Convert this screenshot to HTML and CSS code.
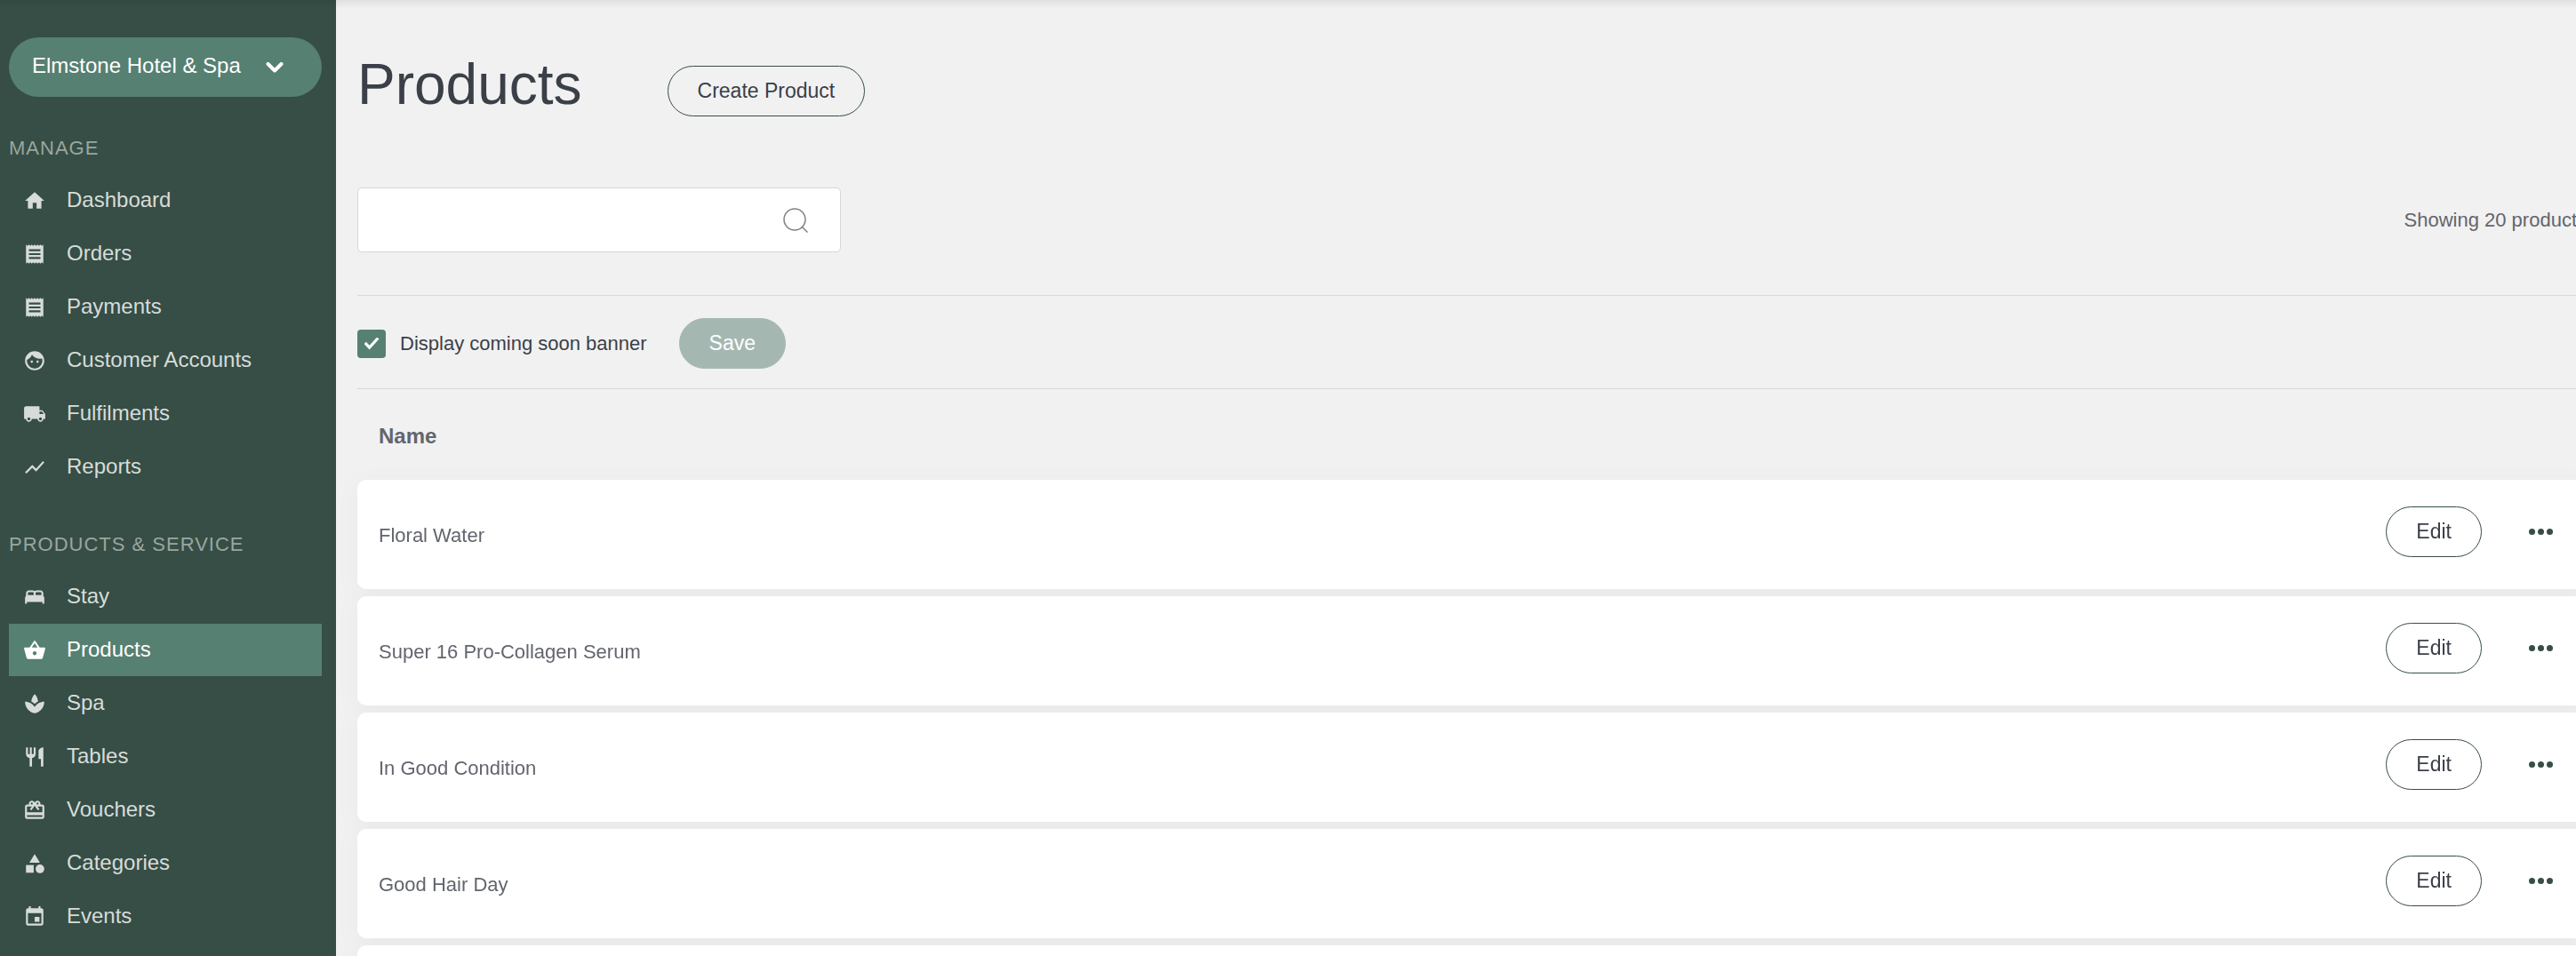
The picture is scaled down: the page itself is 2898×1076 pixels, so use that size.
FILE: index.html
```html
<!DOCTYPE html>
<html lang="en">
<head>
<meta charset="utf-8">
<title>Products</title>
<link rel="stylesheet" href="styles.css">
</head>
<body>
<div class="top-shadow"></div>
<div class="app">
  <aside class="sidebar">
    <button class="venue" type="button">Elmstone Hotel &amp; Spa
      <svg class="venue-arrow" viewBox="0 0 20 12" aria-hidden="true"><path d="M2.500 2 10 9.500 17.500 2"/></svg>
    </button>
    <nav>
      <h2 class="nav-title">MANAGE</h2>
      <ul class="nav-list">
        <li><a class="nav-link" href="#"><svg class="icon" viewBox="0 0 24 24"><path d="M10 20v-6h4v6h5v-8h3L12 3 2 12h3v8z"/></svg>Dashboard</a></li>
        <li><a class="nav-link" href="#"><svg class="icon" viewBox="0 0 24 24"><path d="M18 17H6v-2h12v2zm0-4H6v-2h12v2zm0-4H6V7h12v2zM3 22l1.500-1.500L6 22l1.500-1.500L9 22l1.500-1.500L12 22l1.500-1.500L15 22l1.500-1.500L18 22l1.500-1.500L21 22V2l-1.500 1.500L18 2l-1.500 1.500L15 2l-1.500 1.500L12 2l-1.500 1.500L9 2 7.500 3.500 6 2 4.500 3.500 3 2v20z"/></svg>Orders</a></li>
        <li><a class="nav-link" href="#"><svg class="icon" viewBox="0 0 24 24"><path d="M18 17H6v-2h12v2zm0-4H6v-2h12v2zm0-4H6V7h12v2zM3 22l1.500-1.500L6 22l1.500-1.500L9 22l1.500-1.500L12 22l1.500-1.500L15 22l1.500-1.500L18 22l1.500-1.500L21 22V2l-1.500 1.500L18 2l-1.500 1.500L15 2l-1.500 1.500L12 2l-1.500 1.500L9 2 7.500 3.500 6 2 4.500 3.500 3 2v20z"/></svg>Payments</a></li>
        <li><a class="nav-link" href="#"><svg class="icon" viewBox="0 0 24 24"><path d="M9 11.750c-.69 0-1.250.56-1.250 1.250s.56 1.250 1.250 1.250 1.250-.56 1.250-1.250-.56-1.250-1.250-1.250zm6 0c-.69 0-1.250.56-1.250 1.250s.56 1.250 1.250 1.250 1.250-.56 1.250-1.250-.56-1.250-1.250-1.250zM12 2C6.480 2 2 6.480 2 12s4.480 10 10 10 10-4.480 10-10S17.520 2 12 2zm0 18c-4.410 0-8-3.590-8-8 0-.29.02-.58.05-.86 2.360-1.050 4.230-2.980 5.210-5.370C11.070 8.330 14.050 10 17.420 10c.78 0 1.530-.09 2.250-.26.21.71.33 1.470.33 2.260 0 4.410-3.590 8-8 8z"/></svg>Customer Accounts</a></li>
        <li><a class="nav-link" href="#"><svg class="icon" viewBox="0 0 24 24"><path d="M20 8h-3V4H3c-1.100 0-2 .9-2 2v11h2c0 1.660 1.340 3 3 3s3-1.340 3-3h6c0 1.660 1.340 3 3 3s3-1.340 3-3h2v-5l-3-4zM6 18.500c-.83 0-1.500-.67-1.500-1.500s.67-1.500 1.500-1.500 1.500.67 1.500 1.500-.67 1.500-1.500 1.500zm13.500-9l1.960 2.500H17V9.500h2.500zm-1.500 9c-.83 0-1.500-.67-1.500-1.500s.67-1.500 1.500-1.500 1.500.67 1.500 1.500-.67 1.500-1.500 1.500z"/></svg>Fulfilments</a></li>
        <li><a class="nav-link" href="#"><svg class="icon" viewBox="0 0 24 24"><path d="M3.500 18.490l6-6.010 4 4L22 6.920l-1.410-1.410-7.090 7.970-4-4L2 16.990z"/></svg>Reports</a></li>
      </ul>
      <h2 class="nav-title">PRODUCTS &amp; SERVICE</h2>
      <ul class="nav-list">
        <li><a class="nav-link" href="#"><svg class="icon" viewBox="0 0 24 24"><path d="M21 10.780V8c0-1.650-1.350-3-3-3h-4c-.77 0-1.470.3-2 .78-.53-.48-1.230-.78-2-.78H6C4.350 5 3 6.350 3 8v2.780c-.61.55-1 1.340-1 2.220v6h2v-2h16v2h2v-6c0-.88-.39-1.670-1-2.220zM14 7h4c.55 0 1 .45 1 1v2h-6V8c0-.55.45-1 1-1zM5 8c0-.55.45-1 1-1h4c.55 0 1 .45 1 1v2H5V8z"/></svg>Stay</a></li>
        <li><a class="nav-link active" href="#" aria-current="page"><svg class="icon" viewBox="0 0 24 24"><path d="M17.210 9l-4.380-6.560c-.19-.28-.51-.42-.83-.42s-.64.14-.83.43L6.790 9H2c-.55 0-1 .45-1 1 0 .09.01.18.04.27l2.540 9.270c.23.84 1 1.460 1.920 1.460h13c.92 0 1.690-.62 1.930-1.460l2.540-9.270L23 10c0-.55-.45-1-1-1h-4.790zM9 9l3-4.400L15 9H9zm3 8c-1.100 0-2-.9-2-2s.9-2 2-2 2 .9 2 2-.9 2-2 2z"/></svg>Products</a></li>
        <li><a class="nav-link" href="#"><svg class="icon" viewBox="0 0 24 24"><path d="M15.490 9.630c-.18-2.790-1.310-5.510-3.430-7.630-2.140 2.140-3.320 4.860-3.550 7.630 1.280.68 2.460 1.560 3.490 2.630 1.030-1.060 2.210-1.940 3.490-2.630zM12 15.450C9.850 12.170 6.180 10 2 10c0 5.320 3.360 9.820 8.030 11.490.63.23 1.290.4 1.970.51.68-.12 1.330-.29 1.970-.51C18.640 19.820 22 15.320 22 10c-4.180 0-7.850 2.170-10 5.450z"/></svg>Spa</a></li>
        <li><a class="nav-link" href="#"><svg class="icon" viewBox="0 0 24 24"><path d="M11 9H9V2H7v7H5V2H3v7c0 2.120 1.660 3.840 3.750 3.970V22h2.500v-9.030C11.340 12.840 13 11.120 13 9V2h-2v7zm5-3v8h2.500v8H21V2c-2.760 0-5 2.240-5 4z"/></svg>Tables</a></li>
        <li><a class="nav-link" href="#"><svg class="icon" viewBox="0 0 24 24"><path d="M20 6h-2.180c.11-.31.18-.65.18-1 0-1.660-1.340-3-3-3-1.050 0-1.960.54-2.500 1.350l-.5.67-.5-.68C10.960 2.540 10.050 2 9 2 7.340 2 6 3.340 6 5c0 .35.07.69.18 1H4c-1.110 0-1.990.89-1.990 2L2 19c0 1.110.89 2 2 2h16c1.110 0 2-.89 2-2V8c0-1.110-.89-2-2-2zm-5-2c.55 0 1 .45 1 1s-.45 1-1 1-1-.45-1-1 .45-1 1-1zM9 4c.55 0 1 .45 1 1s-.45 1-1 1-1-.45-1-1 .45-1 1-1zm11 15H4v-2h16v2zm0-5H4V8h5.080L7 10.830 8.620 12 11 8.760l1-1.360 1 1.360L15.380 12 17 10.830 14.920 8H20v6z"/></svg>Vouchers</a></li>
        <li><a class="nav-link" href="#"><svg class="icon" viewBox="0 0 24 24"><path d="M12 2l-5.500 9h11z"/><circle cx="17.500" cy="17.500" r="4.500"/><path d="M3 13.500h8v8H3z"/></svg>Categories</a></li>
        <li><a class="nav-link" href="#"><svg class="icon" viewBox="0 0 24 24"><path d="M17 12h-5v5h5v-5zM16 1v2H8V1H6v2H5c-1.110 0-1.990.9-1.990 2L3 19c0 1.100.89 2 2 2h14c1.100 0 2-.9 2-2V5c0-1.100-.9-2-2-2h-1V1h-2zm3 18H5V8h14v11z"/></svg>Events</a></li>
      </ul>
    </nav>
  </aside>
  <main class="main">
    <div class="content">
      <header class="page-head">
        <h1 class="page-title">Products</h1>
        <button class="btn" type="button">Create Product</button>
      </header>
      <div class="toolbar">
        <label class="search">
          <input class="search-input" type="search" aria-label="Search products">
          <svg class="search-icon" viewBox="0 0 28 28" aria-hidden="true"><circle cx="13" cy="13" r="12"/><path d="M21 21 27.500 27.500"/></svg>
        </label>
        <p class="count">Showing 20 products</p>
      </div>
      <form class="banner">
        <label class="banner-label"><input class="check" type="checkbox" checked>Display coming soon banner</label>
        <button class="btn btn-save" type="submit" disabled>Save</button>
      </form>
      <table class="products">
        <thead><tr><th scope="col">Name</th><td></td></tr></thead>
        <tbody>
          <tr><td>Floral Water</td><td class="actions"><div class="action-row"><button class="btn" type="button">Edit</button><button class="more" type="button" aria-label="More options"><i></i><i></i><i></i></button></div></td></tr>
          <tr><td>Super 16 Pro-Collagen Serum</td><td class="actions"><div class="action-row"><button class="btn" type="button">Edit</button><button class="more" type="button" aria-label="More options"><i></i><i></i><i></i></button></div></td></tr>
          <tr><td>In Good Condition</td><td class="actions"><div class="action-row"><button class="btn" type="button">Edit</button><button class="more" type="button" aria-label="More options"><i></i><i></i><i></i></button></div></td></tr>
          <tr><td>Good Hair Day</td><td class="actions"><div class="action-row"><button class="btn" type="button">Edit</button><button class="more" type="button" aria-label="More options"><i></i><i></i><i></i></button></div></td></tr>
          <tr><td></td><td class="actions"></td></tr>
        </tbody>
      </table>
    </div>
  </main>
</div>
</body>
</html>
```
FILE: styles.css
```css
* { box-sizing: border-box; }

body {
  margin: 0;
  height: 100vh;
  overflow: hidden;
  background: #f1f1f1;
  color: #62656e;
  font: 22px/28px "Liberation Sans", Arial, Helvetica, sans-serif;
}

h1, h2, p, ul { margin: 0; padding: 0; }
button { font: inherit; }

.top-shadow {
  position: absolute;
  inset: 0 0 auto;
  height: 10px;
  background: linear-gradient(rgba(0, 0, 0, .07), transparent);
}

.app { display: flex; height: 100%; }

/* Sidebar */
.sidebar {
  flex: 0 0 378px;
  padding: 42px 16px 0 10px;
  background: #364e45;
}

.venue {
  display: flex;
  align-items: center;
  gap: 28px;
  width: 100%;
  padding: 18px 26px 21px;
  border: 0;
  border-radius: 34px;
  background: #568071;
  color: #fff;
  font-size: 24px;
  white-space: nowrap;
}

.venue-arrow {
  width: 20px;
  height: 12px;
  margin-top: 3px;
  fill: none;
  stroke: currentColor;
  stroke-width: 4;
  stroke-linecap: round;
  stroke-linejoin: round;
}

.nav-title {
  margin: 44px 0 15px;
  color: #9aa6a1;
  font-size: 22px;
  font-weight: 400;
  letter-spacing: 1px;
}

.nav-list {
  display: flex;
  flex-direction: column;
  gap: 1px;
  list-style: none;
}

.nav-link {
  display: flex;
  align-items: center;
  gap: 23px;
  padding: 15px 16px 16px;
  color: #d7dcda;
  font-size: 24px;
  text-decoration: none;
}

.nav-link.active { background: #568071; color: #fff; }

.icon {
  width: 26px;
  height: 26px;
  margin-top: 2px;
  fill: currentColor;
}

/* Main */
.main {
  flex: 1;
  min-width: 0;
  padding-left: 24px;
  overflow: hidden;
}

.content { margin-right: -12px; }

.page-head {
  display: flex;
  align-items: flex-end;
  gap: 96px;
  padding-top: 59px;
}

.page-title {
  color: #3b3f48;
  font-size: 64px;
  font-weight: 400;
  line-height: 72px;
}

.btn {
  padding: 13px 33px 14px;
  border: 1px solid #364e45;
  border-radius: 29px;
  background: transparent;
  color: #3b3f48;
  font-size: 23px;
}

.toolbar {
  display: flex;
  align-items: center;
  justify-content: space-between;
  padding: 80px 0 48px;
  border-bottom: 1px solid #d7d8da;
}

.search {
  display: flex;
  align-items: center;
  width: 544px;
  padding: 0 36px 0 16px;
  border: 1px solid #d5d6da;
  border-radius: 5px;
  background: #fff;
}

.search-input {
  flex: 1;
  height: 71px;
  border: 0;
  outline: 0;
  background: none;
  font: inherit;
}

.search-icon {
  width: 28px;
  height: 28px;
  fill: none;
  stroke: #808080;
  stroke-width: 1.5;
}

.banner {
  display: flex;
  align-items: center;
  gap: 36px;
  padding: 25px 0 22px;
  border-bottom: 1px solid #d7d8da;
}

.banner-label {
  display: flex;
  align-items: center;
  gap: 16px;
  color: #3b3f48;
}

.check {
  appearance: none;
  display: grid;
  place-items: center;
  width: 32px;
  height: 32px;
  margin: 0;
  border-radius: 4px;
  background: #568071;
}

.check:checked::after {
  content: "";
  width: 17px;
  height: 14px;
  background: #fff;
  clip-path: polygon(0 54%, 14% 38%, 36% 66%, 86% 0, 100% 14%, 36% 100%);
}

.btn-save {
  border-color: #a4b8b1;
  background: #a4b8b1;
  color: #fff;
}

/* Product list */
.products {
  width: 100%;
  border-spacing: 0 8px;
}

.products th {
  padding: 31px 24px 27px;
  font-size: 24px;
  text-align: left;
}

.products tbody { filter: drop-shadow(0 4px 12px rgba(0, 0, 0, .03)); }

.products tbody td {
  height: 123px;
  padding: 2px 24px 0;
  background: #fff;
}

.products tbody td:first-child { border-radius: 10px 0 0 10px; }
.products tbody td:last-child { border-radius: 0 10px 10px 0; }

.products tbody .actions {
  width: 1px;
  padding: 30px 36px 0 0;
  vertical-align: top;
}

.action-row { display: flex; align-items: center; gap: 51px; }

.more {
  display: flex;
  gap: 3px;
  padding: 8px 2px;
  border: 0;
  background: none;
}

.more i {
  width: 7px;
  height: 7px;
  border-radius: 50%;
  background: #364e45;
}
```
